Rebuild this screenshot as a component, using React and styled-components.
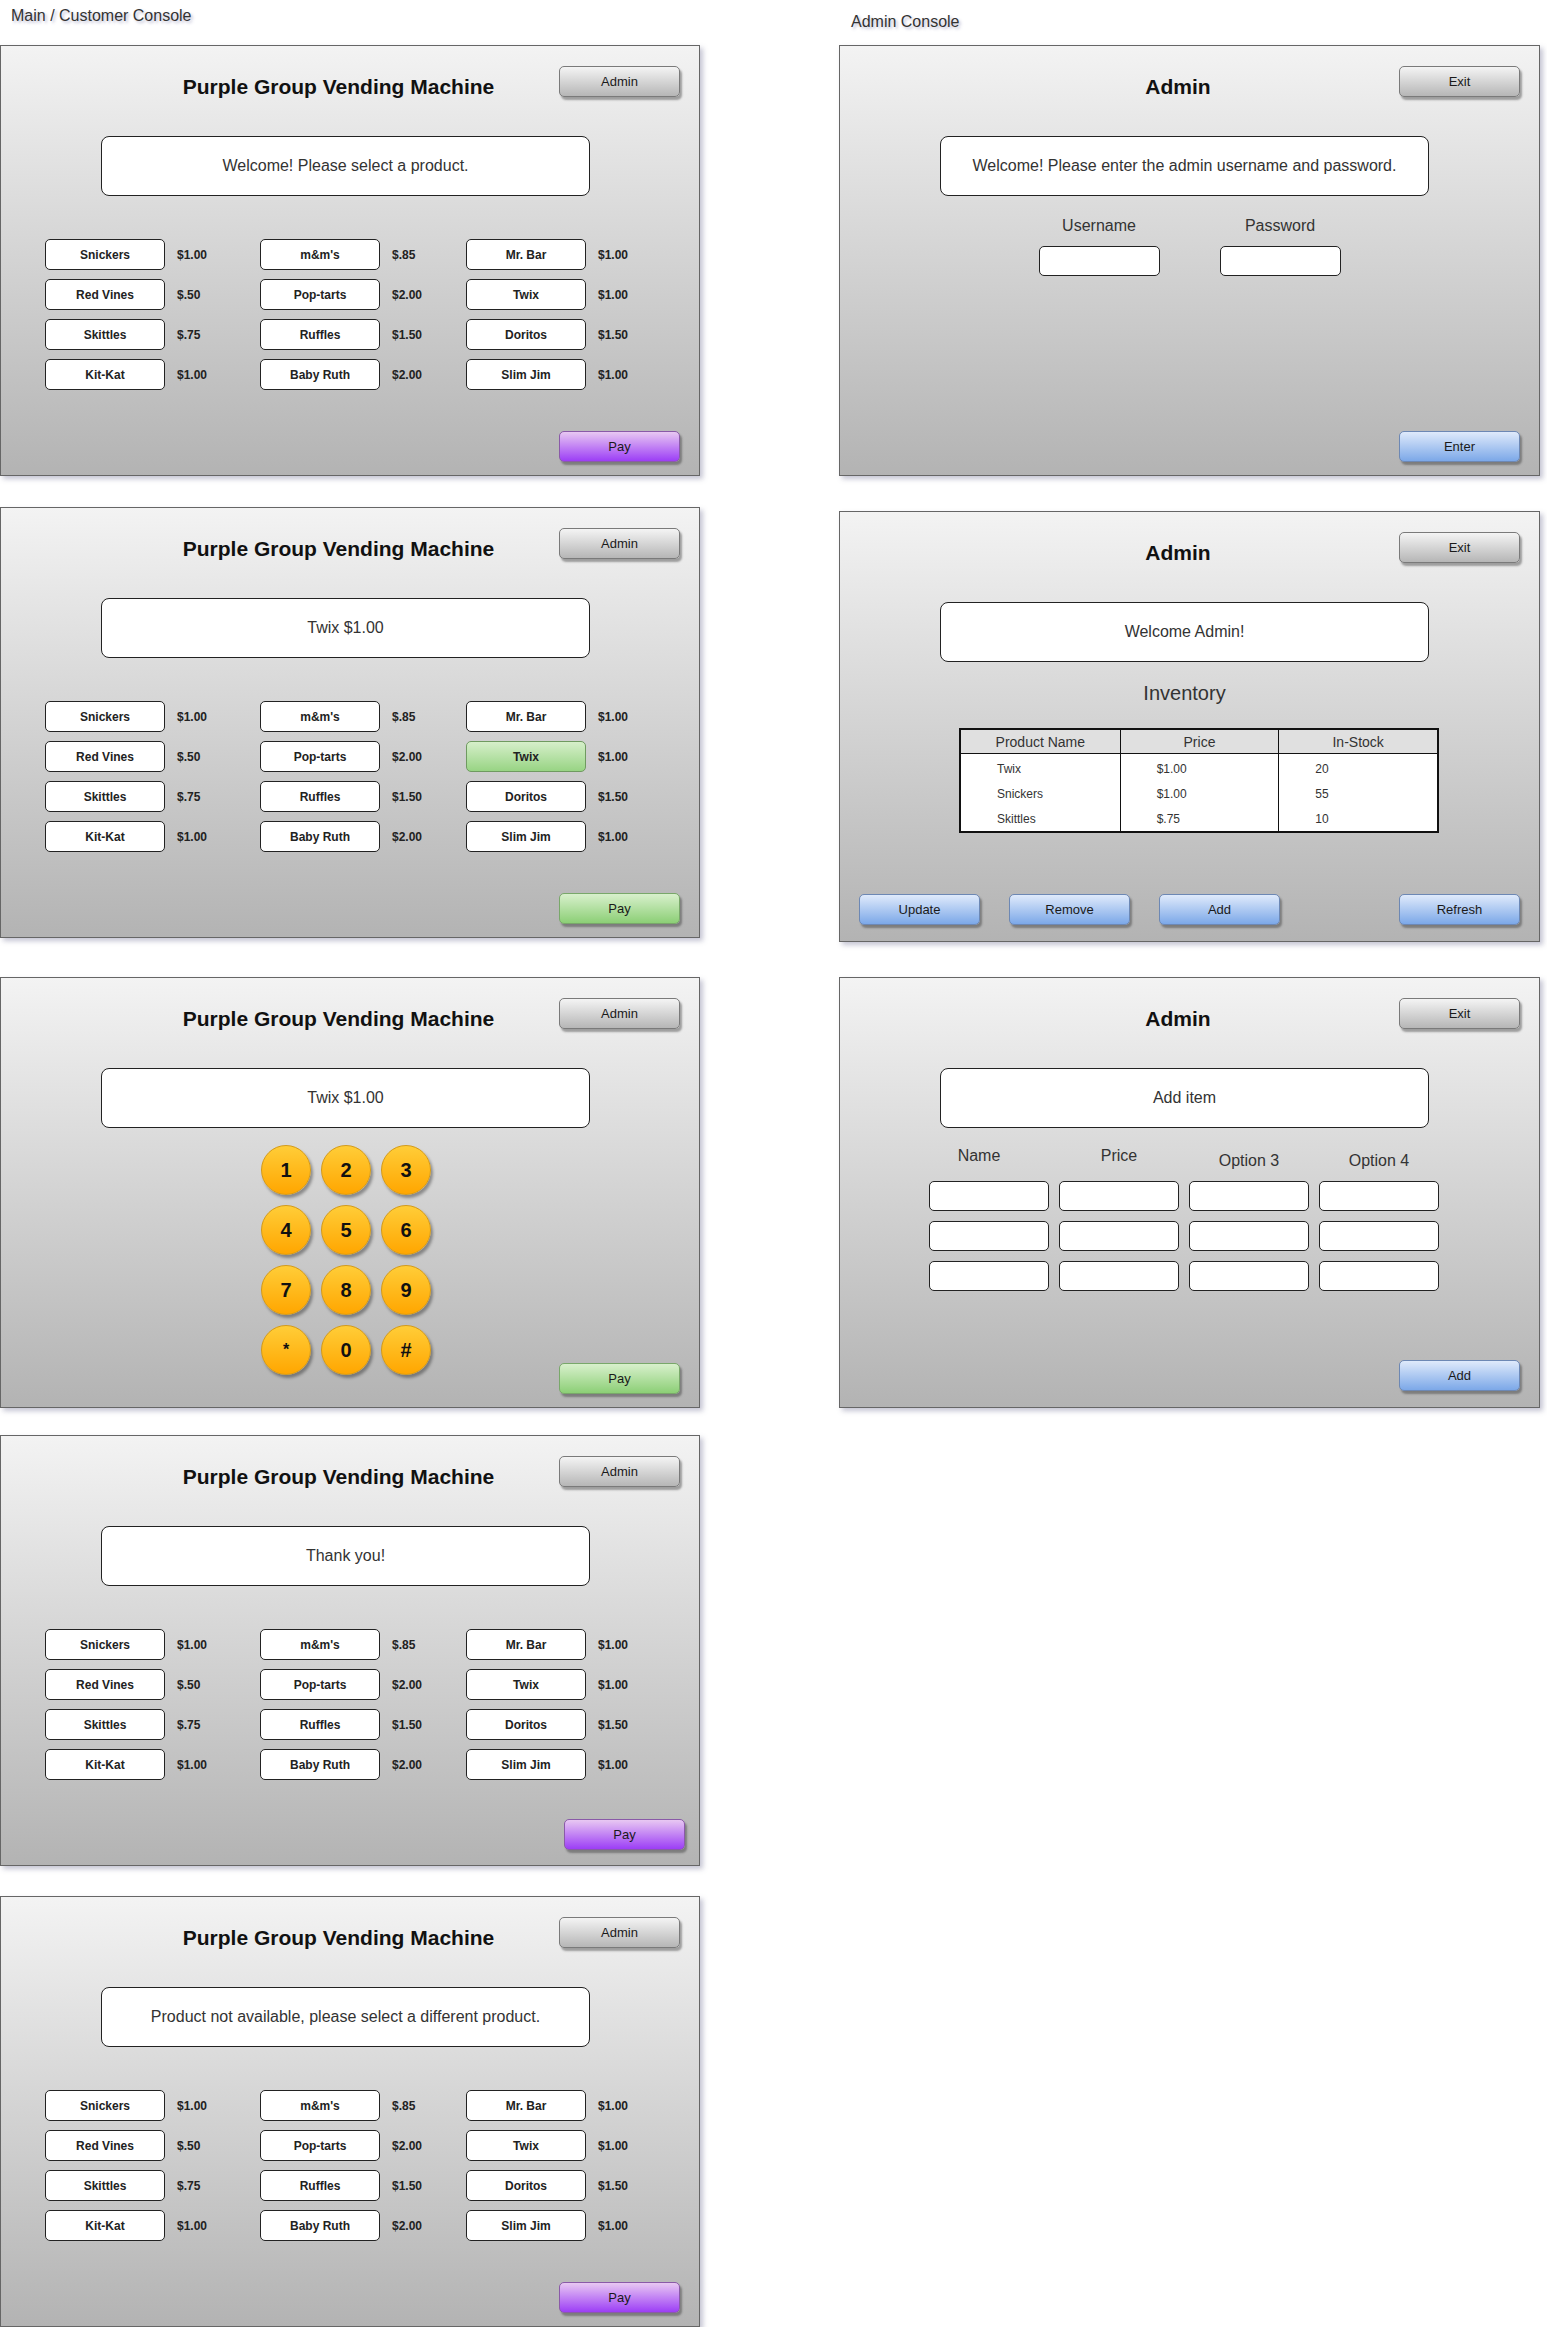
import React from 'react';
import styled, { createGlobalStyle } from 'styled-components';

const GlobalStyle = createGlobalStyle`
  body {
    margin: 0;
    background: #fff;
    font-family: 'Liberation Sans', Arial, sans-serif;
  }
`;

const tones = {
  gray: { top: '#f4f4f4', bottom: '#b6b6b6', border: '#7a7a7a' },
  purple: { top: '#e8c8f2', bottom: '#9c3ef6', border: '#8a5aa8' },
  green: { top: '#d8f0cc', bottom: '#8ccf76', border: '#79a86a' },
  blue: { top: '#dfeafb', bottom: '#7ca8e8', border: '#6d88b4' },
};

const Page = styled.div`
  display: flex;
  gap: 139px;
  width: 1547px;
`;

const Column = styled.div`
  display: flex;
  flex-direction: column;
  width: ${p => p.$width}px;
`;

const Caption = styled.div`
  height: 45px;
  box-sizing: border-box;
  padding: ${p => p.$top}px 0 0 ${p => p.$left}px;
  font-size: 16px;
  line-height: 18px;
  color: #333;
  text-shadow: 2px 2px 3px rgba(110, 110, 160, 0.45);
`;

const Panel = styled.section`
  box-sizing: border-box;
  height: 431px;
  margin-top: ${p => p.$gap || 0}px;
  display: flex;
  flex-direction: column;
  border: 1px solid #666;
  background: linear-gradient(#f3f3f3, #b3b3b3);
  box-shadow: 3px 3px 5px rgba(90, 90, 130, 0.35);

  & > * {
    flex-shrink: 0;
  }
`;

const Header = styled.div`
  display: flex;
  align-items: flex-start;
  padding: 20px 19px 0 117px;
`;

const Title = styled.h1`
  flex: 1;
  margin: 11px 0 0;
  text-align: center;
  font-size: 21px;
  line-height: 20px;
  font-weight: bold;
  color: #111;
`;

const ActionButton = styled.button`
  box-sizing: border-box;
  width: 121px;
  height: 31px;
  padding: 0;
  border: 1px solid ${p => tones[p.$tone].border};
  border-radius: 5px;
  background: linear-gradient(${p => tones[p.$tone].top}, ${p => tones[p.$tone].bottom});
  box-shadow: 2px 3px 2px rgba(40, 40, 40, 0.4);
  font-family: 'Liberation Sans', Arial, sans-serif;
  font-size: 13px;
  color: #1a1a1a;
`;

const Message = styled.div`
  box-sizing: border-box;
  width: 489px;
  height: 60px;
  margin: 39px 0 0 100px;
  display: flex;
  align-items: center;
  justify-content: center;
  background: #fff;
  border: 1px solid #222;
  border-radius: 8px;
  font-size: 16px;
  color: #333;
`;

const Products = styled.div`
  display: grid;
  grid-template-columns: 215px 206px auto;
  row-gap: 9px;
  margin: 43px 0 0 44px;
`;

const ProductItem = styled.div`
  display: flex;
  align-items: center;
  gap: 12px;
`;

const ProductButton = styled.button`
  box-sizing: border-box;
  width: 120px;
  height: 31px;
  padding: 0;
  border: 1px solid ${p => (p.$selected ? '#6f9a60' : '#222')};
  border-radius: 5px;
  background: ${p => (p.$selected ? 'linear-gradient(#d6efca, #98d484)' : '#fff')};
  font-family: 'Liberation Sans', Arial, sans-serif;
  font-size: 12px;
  font-weight: bold;
  color: #222;
`;

const Price = styled.span`
  font-size: 12px;
  font-weight: bold;
  color: #222;
`;

const Keypad = styled.div`
  display: grid;
  grid-template-columns: repeat(3, 50px);
  gap: 10px;
  margin: 17px 0 -40px 260px;
`;

const Key = styled.button`
  width: 50px;
  height: 50px;
  padding: 0;
  border-radius: 50%;
  border: 1px solid #d49a18;
  background: linear-gradient(#ffcd38, #ffa600);
  box-shadow: 2px 3px 3px rgba(0, 0, 0, 0.35);
  font-family: 'Liberation Sans', Arial, sans-serif;
  font-size: ${p => (p.$small ? 16 : 20)}px;
  font-weight: bold;
  color: #111;
`;

const Footer = styled.div`
  margin-top: auto;
  display: flex;
  gap: 29px;
  justify-content: flex-end;
  padding: 0 ${p => p.$right ?? 19}px ${p => p.$bottom ?? 13}px 19px;
`;

const Push = styled.div`
  flex: 1;
`;

const Fields = styled.div`
  display: flex;
  justify-content: center;
  gap: 60px;
  margin-top: 20px;
`;

const Field = styled.label`
  display: flex;
  flex-direction: column;
  align-items: center;
  gap: 10px;
  font-size: 16px;
  line-height: 20px;
  color: #333;
`;

const TextBox = styled.input`
  box-sizing: border-box;
  width: ${p => p.$width || 121}px;
  height: 30px;
  margin: 0;
  border: 1px solid #222;
  border-radius: 5px;
  background: #fff;
`;

const SectionTitle = styled.div`
  width: 489px;
  margin: 19px 0 0 100px;
  text-align: center;
  font-size: 20px;
  line-height: 24px;
  color: #333;
`;

const Table = styled.table`
  width: 480px;
  margin: 23px 0 0 119px;
  border-spacing: 0;
  border: 2px solid #111;
  background: #fff;
  table-layout: fixed;

  th {
    height: 23px;
    padding: 0;
    background: #e0e0e0;
    border-bottom: 1px solid #111;
    font-size: 14px;
    font-weight: normal;
    color: #333;
  }

  td {
    height: 25px;
    padding: 0 0 0 36px;
    font-size: 12px;
    color: #333;
  }

  th + th,
  td + td {
    border-left: 1px solid #111;
  }

  tbody tr:first-child td {
    padding-top: 2px;
  }
`;

const EntryGrid = styled.div`
  display: grid;
  grid-template-columns: repeat(4, 120px);
  gap: 10px;
  margin: 18px 0 0 89px;
`;

const EntryLabel = styled.div`
  text-align: center;
  font-size: 16px;
  line-height: 20px;
  color: #333;
  padding: ${p => (p.$low ? '5px 0 0' : '0 0 5px')};
  padding-right: ${p => (p.$shift ? 20 : 0)}px;
`;

const products = [
  ['Snickers', '$1.00'], ["m&m's", '$.85'], ['Mr. Bar', '$1.00'],
  ['Red Vines', '$.50'], ['Pop-tarts', '$2.00'], ['Twix', '$1.00'],
  ['Skittles', '$.75'], ['Ruffles', '$1.50'], ['Doritos', '$1.50'],
  ['Kit-Kat', '$1.00'], ['Baby Ruth', '$2.00'], ['Slim Jim', '$1.00'],
];

const keys = ['1', '2', '3', '4', '5', '6', '7', '8', '9', '*', '0', '#'];

const inventory = [
  ['Twix', '$1.00', '20'],
  ['Snickers', '$1.00', '55'],
  ['Skittles', '$.75', '10'],
];

const CustomerPanel = ({ gap, message, selected, payTone = 'purple', keypad, payRight, payBottom }) => (
  <Panel $gap={gap}>
    <Header>
      <Title>Purple Group Vending Machine</Title>
      <ActionButton $tone="gray">Admin</ActionButton>
    </Header>
    <Message>{message}</Message>
    {keypad ? (
      <Keypad>
        {keys.map(k => (
          <Key key={k} $small={k === '*'}>{k}</Key>
        ))}
      </Keypad>
    ) : (
      <Products>
        {products.map(([name, price]) => (
          <ProductItem key={name}>
            <ProductButton $selected={name === selected}>{name}</ProductButton>
            <Price>{price}</Price>
          </ProductItem>
        ))}
      </Products>
    )}
    <Footer $right={payRight} $bottom={payBottom}>
      <ActionButton $tone={payTone}>Pay</ActionButton>
    </Footer>
  </Panel>
);

const AdminHeader = () => (
  <Header>
    <Title>Admin</Title>
    <ActionButton $tone="gray">Exit</ActionButton>
  </Header>
);

const App = () => (
  <>
    <GlobalStyle />
    <Page>
      <Column $width={700}>
        <Caption $top={7} $left={11}>Main / Customer Console</Caption>
        <CustomerPanel message="Welcome! Please select a product." />
        <CustomerPanel gap={31} message="Twix $1.00" selected="Twix" payTone="green" />
        <CustomerPanel gap={39} message="Twix $1.00" payTone="green" keypad />
        <CustomerPanel gap={27} message="Thank you!" payRight={14} payBottom={15} />
        <CustomerPanel gap={30} message="Product not available, please select a different product." />
      </Column>

      <Column $width={701}>
        <Caption $top={13} $left={12}>Admin Console</Caption>

        <Panel>
          <AdminHeader />
          <Message>Welcome! Please enter the admin username and password.</Message>
          <Fields>
            <Field>
              Username
              <TextBox />
            </Field>
            <Field>
              Password
              <TextBox type="password" />
            </Field>
          </Fields>
          <Footer>
            <ActionButton $tone="blue">Enter</ActionButton>
          </Footer>
        </Panel>

        <Panel $gap={35}>
          <AdminHeader />
          <Message>Welcome Admin!</Message>
          <SectionTitle>Inventory</SectionTitle>
          <Table>
            <thead>
              <tr>
                <th>Product Name</th>
                <th>Price</th>
                <th>In-Stock</th>
              </tr>
            </thead>
            <tbody>
              {inventory.map(row => (
                <tr key={row[0]}>
                  {row.map((cell, i) => (
                    <td key={i}>{cell}</td>
                  ))}
                </tr>
              ))}
            </tbody>
          </Table>
          <Footer $bottom={16}>
            <ActionButton $tone="blue">Update</ActionButton>
            <ActionButton $tone="blue">Remove</ActionButton>
            <ActionButton $tone="blue">Add</ActionButton>
            <Push />
            <ActionButton $tone="blue">Refresh</ActionButton>
          </Footer>
        </Panel>

        <Panel $gap={35}>
          <AdminHeader />
          <Message>Add item</Message>
          <EntryGrid>
            <EntryLabel $shift>Name</EntryLabel>
            <EntryLabel>Price</EntryLabel>
            <EntryLabel $low>Option 3</EntryLabel>
            <EntryLabel $low>Option 4</EntryLabel>
            {Array.from({ length: 12 }, (_, i) => (
              <TextBox key={i} $width={120} />
            ))}
          </EntryGrid>
          <Footer $bottom={16}>
            <ActionButton $tone="blue">Add</ActionButton>
          </Footer>
        </Panel>
      </Column>
    </Page>
  </>
);

export default App;
